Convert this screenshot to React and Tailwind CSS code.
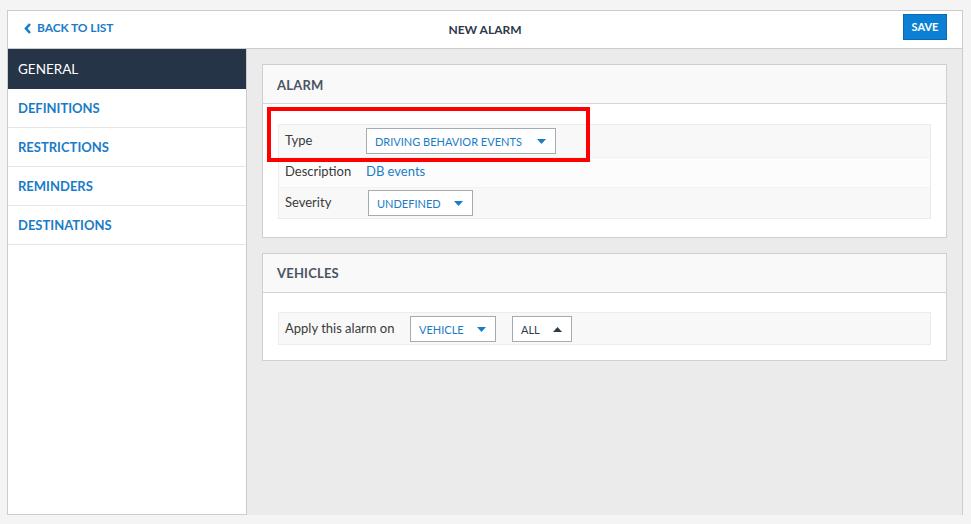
import React from "react";

const Caret = ({ up = false, color = "#1a7cc7" }) => (
  <svg width="9" height="5" viewBox="0 0 9 5" className="shrink-0">
    {up ? (
      <polygon points="0,5 9,5 4.5,0" fill={color} />
    ) : (
      <polygon points="0,0 9,0 4.5,5" fill={color} />
    )}
  </svg>
);

const Select = ({ label, width, dark = false, up = false, ml = "" }) => (
  <div
    className={`flex items-center justify-between h-[26px] border border-[#a3abb3] bg-white pl-[8px] pr-[9px] ${width} ${ml}`}
  >
    <span
      className={`text-[11px] leading-none ${dark ? "text-[#2f3a46]" : "text-[#1a7cc7]"}`}
    >
      {label}
    </span>
    <Caret up={up} color={dark ? "#2f3a46" : "#1a7cc7"} />
  </div>
);

const Card = ({ title, children, pt, pb, hpt }) => (
  <div className="border border-[#cfcfcf] bg-white">
    <div className={`h-[39px] flex items-center px-[14px] bg-[#f9f9f9] border-b border-[#d6d6d6] ${hpt}`}>
      <span className="text-[13px] font-bold text-[#4b5461] tracking-[0.2px]">{title}</span>
    </div>
    <div className={`px-[15px] ${pt} ${pb}`}>{children}</div>
  </div>
);

export default function App() {
  const nav = ["DEFINITIONS", "RESTRICTIONS", "REMINDERS", "DESTINATIONS"];
  return (
    <div
      className="w-[971px] h-[524px] bg-[#f4f4f4] pt-[10px] pl-[7px] pr-[8px] relative"
      style={{ fontFamily: "Lato, 'Open Sans', sans-serif" }}
    >
      <div className="h-[505px] border border-[#cccccc] border-b-0 flex flex-col">
        {/* header */}
        <div className="h-[38px] shrink-0 bg-white border-b border-[#cccccc] flex items-start relative pl-[16px] pr-[15px]">
          <div className="flex items-center gap-[5px] text-[#1a7cc7] mt-[8px]">
            <svg width="8" height="11" viewBox="0 0 8 11">
              <polyline
                points="6,1 2,5.5 6,10"
                fill="none"
                stroke="#1a7cc7"
                strokeWidth="2.6"
                strokeLinejoin="miter"
              />
            </svg>
            <span className="text-[12px] font-bold tracking-[-0.1px]">BACK TO LIST</span>
          </div>
          <div className="absolute left-0 right-0 top-0 bottom-0 flex items-center justify-center pointer-events-none">
            <span className="text-[12px] font-bold text-[#2c3a4b]">NEW ALARM</span>
          </div>
          <div className="ml-auto mt-[3px] h-[26px] w-[44px] flex items-center justify-center bg-[#0a7fd3] border border-[#0b69ad]">
            <span className="text-[11px] font-bold text-white">SAVE</span>
          </div>
        </div>

        {/* body */}
        <div className="flex flex-1 min-h-0">
          <div className="w-[239px] shrink-0 bg-white border-r border-b border-[#cccccc]">
            <div className="h-[40px] bg-[#253447] flex items-center px-[10px]">
              <span className="text-[13.5px] text-white">GENERAL</span>
            </div>
            {nav.map((n) => (
              <div
                key={n}
                className="h-[39px] border-b border-[#e6e6e6] flex items-center px-[10px] pt-[2px]"
              >
                <span className="text-[13px] font-bold text-[#1a7cc7]">{n}</span>
              </div>
            ))}
          </div>

          <div className="flex-1 bg-[#ebebeb] p-[15px] flex flex-col gap-[15px]">
            <Card title="ALARM" pt="pt-[20px]" pb="pb-[18px]" hpt="pt-[3px]">
              <div className="border border-[#ececec] text-[13px] text-[#3a3a3a]">
                <div className="h-[32px] flex items-center bg-[#f8f8f8] pl-[6px]">
                  <span className="w-[81px]">Type</span>
                  <Select label="DRIVING BEHAVIOR EVENTS" width="w-[190px]" />
                </div>
                <div className="h-[30px] flex items-center bg-[#fcfcfc] pl-[6px] border-t border-[#f2f2f2] pb-[1px]">
                  <span className="w-[81px]">Description</span>
                  <span className="text-[#1a7cc7]">DB events</span>
                </div>
                <div className="h-[31px] flex items-center bg-[#f8f8f8] pl-[6px] border-t border-[#f2f2f2]">
                  <span className="w-[83px]">Severity</span>
                  <Select label="UNDEFINED" width="w-[105px]" />
                </div>
              </div>
            </Card>

            <Card title="VEHICLES" pt="pt-[19px]" pb="pb-[15px]" hpt="pt-[1px]">
              <div className="h-[33px] border border-[#ececec] bg-[#f8f8f8] flex items-center pl-[6px] text-[13px] text-[#3a3a3a] pt-[1px]">
                <span className="w-[125px]">Apply this alarm on</span>
                <Select label="VEHICLE" width="w-[86px]" />
                <Select label="ALL" width="w-[60px]" dark up ml="ml-[16px]" />
              </div>
            </Card>
          </div>
        </div>
      </div>

      {/* red highlight overlay */}
      <div className="absolute left-[267px] top-[107px] w-[323px] h-[55px] border-[4px] border-[#ff0000] pointer-events-none" />
    </div>
  );
}
